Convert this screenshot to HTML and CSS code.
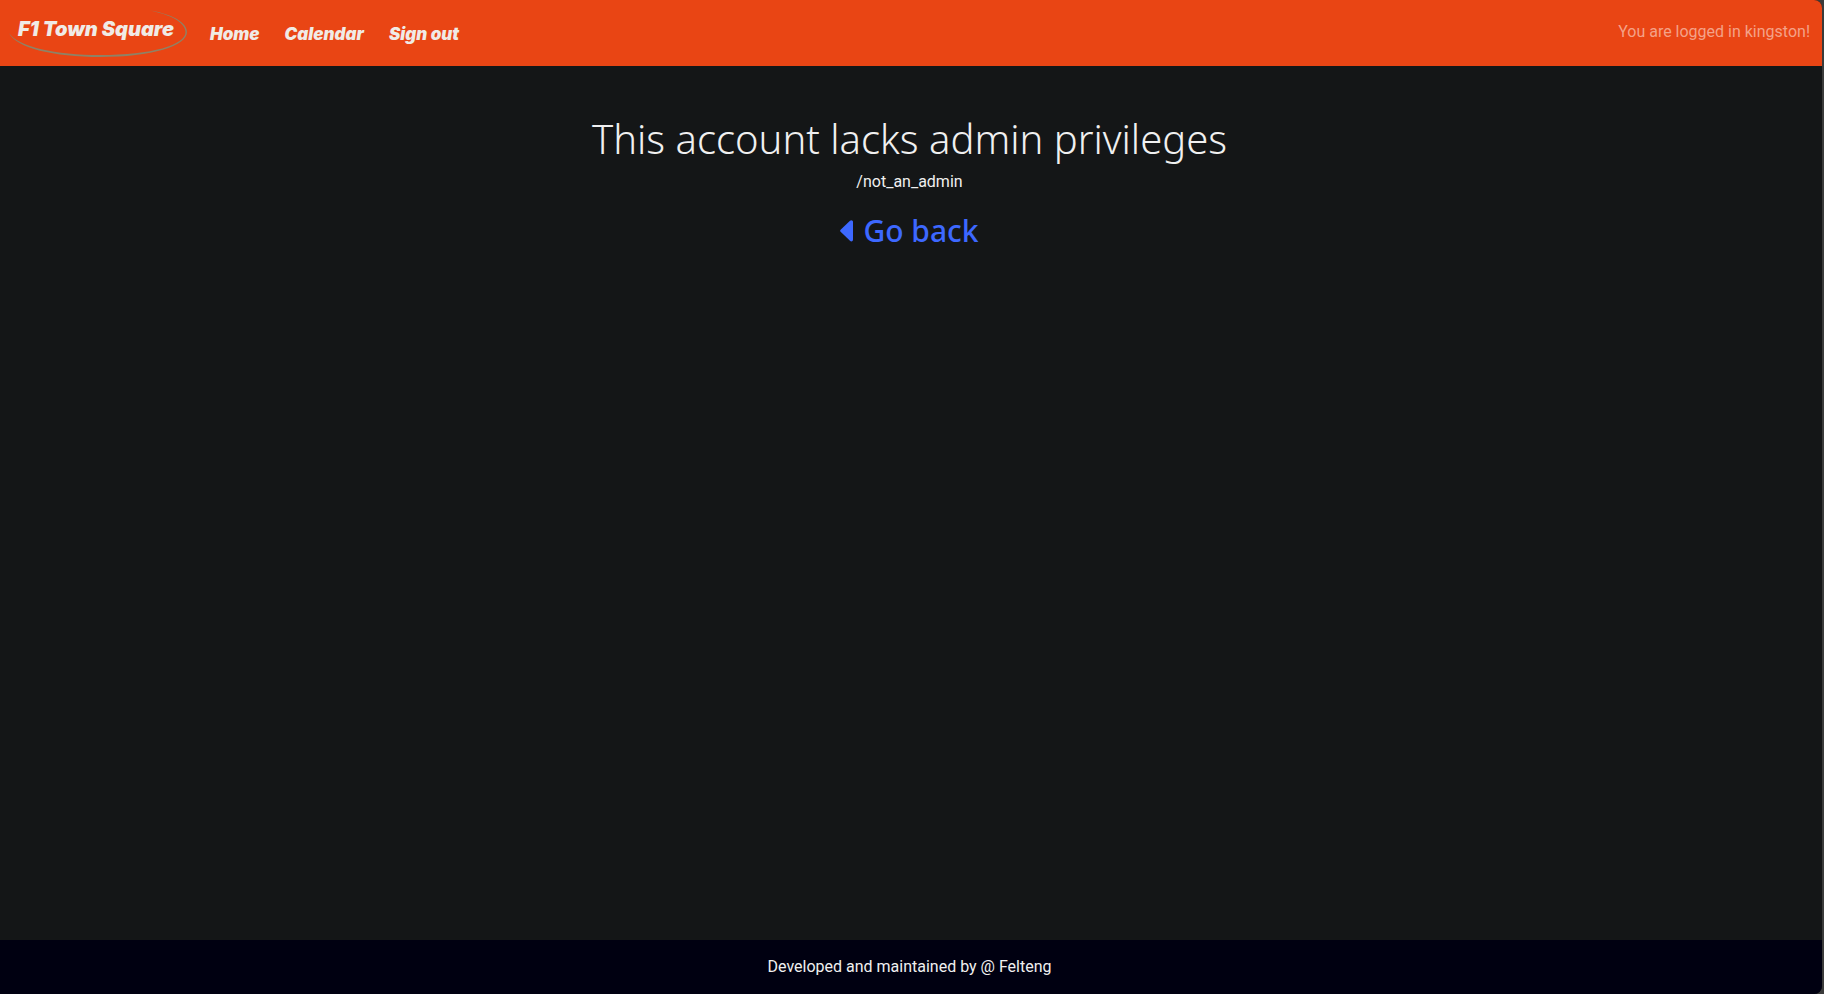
FILE: index.html
```html
<!DOCTYPE html>
<html lang="en">
<head>
<meta charset="utf-8">
<title>F1 Town Square</title>
<link rel="stylesheet" href="styles.css">
</head>
<body>
<div class="page">
  <header class="navbar">
    <a class="brand" href="#">F1 Town Square
      <svg class="brand-ring" viewBox="0 0 180 50" fill="none" aria-hidden="true">
        <path fill="#8e8266" d="M132 1C160 4 179 13 179 24C179 38 144 49 92 49C46 49 8 40 1 25C10 39 48 47 92 47C144 47 177.500 37 177.500 24C177.500 14 160 4.500 132 1Z"/>
      </svg>
    </a>
    <nav class="links">
      <a href="#">Home</a>
      <a href="#">Calendar</a>
      <a href="#">Sign out</a>
    </nav>
    <span class="status">You are logged in kingston!</span>
  </header>
  <main class="content">
    <h1>This account lacks admin privileges</h1>
    <p class="path">/not_an_admin</p>
    <a class="back" href="#"><svg class="caret" viewBox="0 0 13 22" aria-hidden="true"><path fill="currentColor" d="M.6 9.8L10 .7C11.300 -.4 13 .3 13 2V19.500C13 21.300 11.300 22 10 20.800L.6 11.700C0 11.100 0 10.400 .6 9.800Z"/></svg>Go back</a>
  </main>
  <footer class="footer">Developed and maintained by @ Felteng</footer>
</div>
</body>
</html>
```
FILE: styles.css
```css
* { box-sizing: border-box; }
body {
  margin: 0;
  padding-right: 2px;
  background: #3b3b3b;
  color: #f0f0f0;
  font: 16px/24px Roboto, sans-serif;
}
a { text-decoration: none; }
.page {
  display: flex;
  flex-direction: column;
  min-height: 100vh;
  overflow: hidden;
  background: #141617;
  border-radius: 0 8px 8px 0;
}
.navbar {
  display: flex;
  align-items: center;
  height: 66px;
  padding: 0 12px 0 18px;
  background: #e94514;
}
.brand {
  position: relative;
  margin-bottom: 8px;
  color: #f0ebe6;
  font: italic 900 20px/24px Inter, sans-serif;
}
.brand-ring {
  position: absolute;
  top: -9px;
  left: -10px;
  width: 180px;
  height: 50px;
}
.links {
  display: flex;
  gap: 25px;
  margin: 2px 0 0 36px;
}
.links a {
  color: #f0ebe6;
  font: italic 900 17px/24px Inter, sans-serif;
}
.status {
  margin: 0 0 2px auto;
  color: #f4a288;
}
.content {
  flex: 1;
  display: flex;
  flex-direction: column;
  align-items: center;
  padding: 50px 3px 0 0;
}
h1 {
  margin: 0 0 8px;
  font: 300 40px/46px "Noto Sans", sans-serif;
}
.path { margin: 0 0 18px; }
.back {
  display: flex;
  align-items: center;
  gap: 10px;
  color: #3d68ff;
  font: 500 30px/38px "Noto Sans", sans-serif;
}
.caret { width: 13px; height: 22px; }
.footer {
  padding: 15px 3px 15px 0;
  background: #000011;
  text-align: center;
}
```
